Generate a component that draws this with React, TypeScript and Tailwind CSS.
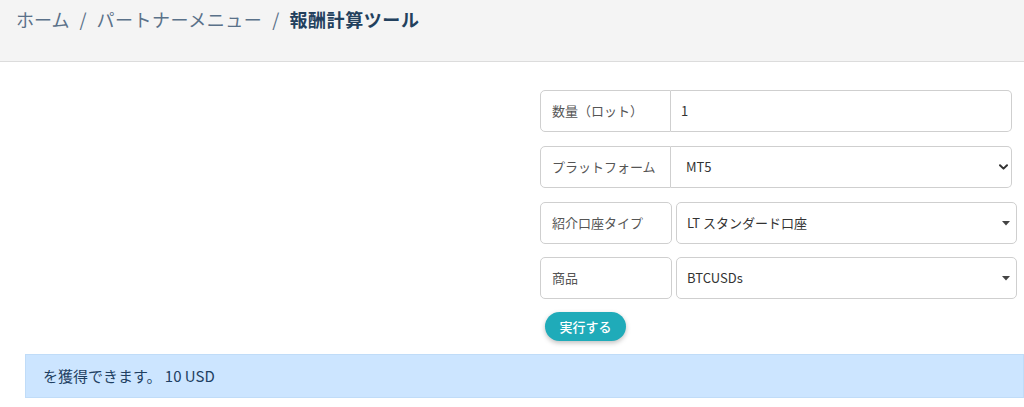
import React from "react";

const font = { fontFamily: '"Noto Sans CJK JP", "Noto Sans", sans-serif' };

function Chevron() {
  return (
    <svg width="9" height="6" viewBox="0 0 9 6" className="shrink-0">
      <path d="M1 1.2 L4.5 4.6 L8 1.2" fill="none" stroke="#333" strokeWidth="2" strokeLinecap="round" strokeLinejoin="round" />
    </svg>
  );
}

function Caret() {
  return (
    <svg width="8" height="5" viewBox="0 0 8 5" className="shrink-0">
      <path d="M0 0 L8 0 L4 4.5 Z" fill="#444" />
    </svg>
  );
}

export default function App() {
  return (
    <div className="w-[1024px] h-[407px] bg-white overflow-hidden" style={font}>
      <div className="h-[62px] bg-[#f4f4f4] border-b border-[#dcdcdc] pl-[16px] pt-[6px]">
        <div className="flex items-center text-[18px] leading-[27px] text-[#5a7189]">
          <span>ホーム</span>
          <span className="px-[10px]">/</span>
          <span className="tracking-[0.5px]">パートナーメニュー</span>
          <span className="px-[10px]">/</span>
          <span className="font-bold tracking-[0.6px] text-[#22405d]">報酬計算ツール</span>
        </div>
      </div>

      <div className="pt-[28px] pl-[540px] flex flex-col text-[13px]">
        <div className="flex w-[472px] h-[42px]">
          <div className="w-[131px] flex items-center pl-[11px] border border-[#cfcfcf] rounded-l-[5px] text-[#555] bg-white">
            数量（ロット）
          </div>
          <div className="flex-1 flex items-center pl-[10px] border border-l-0 border-[#cfcfcf] rounded-r-[5px] text-[#333]">
            1
          </div>
        </div>

        <div className="mt-[14px] flex w-[472px] h-[42px]">
          <div className="w-[131px] flex items-center pl-[11px] border border-[#cfcfcf] rounded-l-[5px] text-[#555] bg-white">
            プラットフォーム
          </div>
          <div className="flex-1 flex items-center justify-between pl-[15px] pr-[3px] border border-l-0 border-[#cfcfcf] rounded-r-[5px] text-[#333]">
            <span>MT5</span>
            <Chevron />
          </div>
        </div>

        <div className="mt-[14px] flex w-[477px] h-[42px] gap-[4px]">
          <div className="w-[132px] flex items-center pl-[11px] border border-[#cfcfcf] rounded-[5px] text-[#555] bg-white">
            紹介口座タイプ
          </div>
          <div className="flex-1 flex items-center justify-between pl-[10px] pr-[6px] border border-[#cfcfcf] rounded-[5px] text-[#333]">
            <span>LT スタンダード口座</span>
            <Caret />
          </div>
        </div>

        <div className="mt-[13px] flex w-[477px] h-[42px] gap-[4px]">
          <div className="w-[132px] flex items-center pl-[11px] border border-[#cfcfcf] rounded-[5px] text-[#555] bg-white">
            商品
          </div>
          <div className="flex-1 flex items-center justify-between pl-[10px] pr-[6px] border border-[#cfcfcf] rounded-[5px] text-[#333]">
            <span>BTCUSDs</span>
            <Caret />
          </div>
        </div>

        <div className="mt-[13px] pl-[5px]">
          <button className="w-[81px] h-[29px] rounded-full bg-[#1fabb9] text-white text-[13px] font-medium shadow-[0_2px_5px_rgba(0,0,0,0.25)]">
            実行する
          </button>
        </div>
      </div>

      <div className="mt-[13px] ml-[25px] h-[44px] bg-[#cce5ff] border border-[#c0dcf8] flex items-center pl-[17px] text-[15px] text-[#1e3f62]">
        を獲得できます。 10 USD
      </div>
    </div>
  );
}
